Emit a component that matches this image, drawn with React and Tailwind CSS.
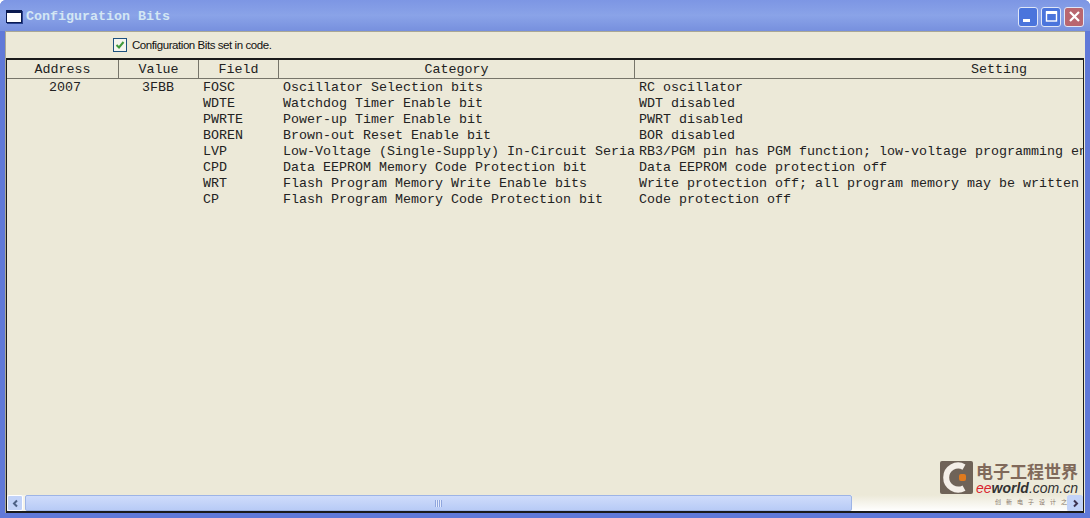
import React from "react";

const rows = [
  ["2007", "3FBB", "FOSC", "Oscillator Selection bits", "RC oscillator"],
  ["", "", "WDTE", "Watchdog Timer Enable bit", "WDT disabled"],
  ["", "", "PWRTE", "Power-up Timer Enable bit", "PWRT disabled"],
  ["", "", "BOREN", "Brown-out Reset Enable bit", "BOR disabled"],
  ["", "", "LVP", "Low-Voltage (Single-Supply) In-Circuit Seria", "RB3/PGM pin has PGM function; low-voltage programming en"],
  ["", "", "CPD", "Data EEPROM Memory Code Protection bit", "Data EEPROM code protection off"],
  ["", "", "WRT", "Flash Program Memory Write Enable bits", "Write protection off; all program memory may be written"],
  ["", "", "CP", "Flash Program Memory Code Protection bit", "Code protection off"],
];

const mono = "font-['Liberation_Mono','Courier_New',monospace]";

const HeaderCell = ({ className, children }) => (
  <div className={`h-[18px] shrink-0 flex items-center justify-center border-r border-[#77756a] overflow-hidden pt-[2px] ${className}`}>
    {children}
  </div>
);

const WinButton = ({ className, children }) => (
  <div className={`w-[20px] h-[20px] rounded-[3px] border border-[#dfe6f8] flex items-center justify-center ${className}`}>
    <svg width="15" height="15" viewBox="0 0 15 15">{children}</svg>
  </div>
);

const Logo = () => (
  <div className="absolute right-[5px] bottom-[5px] w-[138px] h-[45px] flex items-start gap-[3px]">
    <svg width="33" height="33" viewBox="0 0 33 33" className="shrink-0">
      <rect width="33" height="33" rx="2" fill="#6f6358" />
      <path d="M24 6 A12 12 0 1 0 24 27" fill="none" stroke="#f4efe8" strokeWidth="6" />
      <rect x="19" y="13" width="7" height="7" rx="2" fill="#e07a1e" />
    </svg>
    <div className="flex flex-col items-start">
      <span className="text-[17px] leading-[20px] font-bold text-[#80695a] whitespace-nowrap font-['Noto_Sans_CJK_SC',sans-serif]">电子工程世界</span>
      <span className="text-[14px] leading-[14px] italic whitespace-nowrap font-['Liberation_Sans',sans-serif] text-[#333]">
        <span className="text-[#d9232e]">ee</span>
        <span className="font-bold">world</span>
        <span>.com.cn</span>
      </span>
      <span className="text-[6px] leading-[8px] tracking-[5px] mt-[3px] ml-[19px] whitespace-nowrap text-[#8a7a6c] font-['Noto_Sans_CJK_SC',sans-serif]">创新电子设计之</span>
    </div>
  </div>
);

export default function App() {
  return (
    <div className="w-[1090px] h-[518px] overflow-hidden flex flex-col bg-[#6079d8] rounded-t-[6px]">
      {/* title bar */}
      <div className="h-[31px] shrink-0 flex items-center pt-[2px] pl-[6px] pr-[6px] bg-gradient-to-b from-[#7d96e4] via-[#8aa3e8] to-[#7790de]">
        <div className="w-[16px] h-[13px] bg-white border border-[#0a1a50] border-t-[3px] shadow-[1px_1px_0_#27408f]" />
        <span className={`ml-[4px] text-[13.33px] font-bold text-[#d3e6f4] ${mono}`}>Configuration Bits</span>
        <div className="ml-auto flex gap-[3px]">
          <WinButton className="bg-[#4a74dc]">
            <rect x="2" y="10" width="7" height="3" fill="#fff" />
          </WinButton>
          <WinButton className="bg-[#4a74dc]">
            <rect x="2.5" y="3" width="10" height="9" fill="none" stroke="#fff" strokeWidth="1.4" />
            <rect x="2" y="2" width="11" height="3" fill="#fff" />
          </WinButton>
          <WinButton className="bg-[#b9666f]">
            <path d="M3 3 L12 12 M12 3 L3 12" stroke="#fff" strokeWidth="2.2" />
          </WinButton>
        </div>
      </div>

      {/* client area */}
      <div className="flex-1 min-h-0 mx-[5px] mb-[5px] flex flex-col bg-[#ece9d8] border-t border-l border-[#a9a795]">
        <div className="h-[26px] shrink-0 flex items-center pl-[107px]">
          <div className="w-[14px] h-[14px] border border-[#1c5180] bg-[#f4f4ee] flex items-center justify-center">
            <svg width="10" height="10" viewBox="0 0 10 10">
              <path d="M1.5 5 L4 7.5 L8.5 2" fill="none" stroke="#3f9a3a" strokeWidth="2" />
            </svg>
          </div>
          <span className="ml-[5px] pt-[1px] text-[11.5px] tracking-[-0.43px] text-[#111] font-['Liberation_Sans',Arial,sans-serif]">Configuration Bits set in code.</span>
        </div>

        {/* list */}
        <div className={`relative flex-1 min-h-0 flex flex-col overflow-hidden mr-[1px] border-t-2 border-l border-r border-b-2 border-[#1a1a1a] text-[13.33px] text-[#222] ${mono}`}>
          <div className="flex shrink-0 border-b border-[#77756a]">
            <HeaderCell className="w-[112px]">Address</HeaderCell>
            <HeaderCell className="w-[80px]">Value</HeaderCell>
            <HeaderCell className="w-[80px]">Field</HeaderCell>
            <HeaderCell className="w-[356px]">Category</HeaderCell>
            <HeaderCell className="w-[728px] border-r-0">Setting</HeaderCell>
          </div>

          <div className="flex-1 min-h-0 pt-[1px]">
            {rows.map((r) => (
              <div key={r[2]} className="flex h-[16px] leading-[16px] whitespace-nowrap">
                <div className="w-[112px] shrink-0 pl-[4px] text-center">{r[0]}</div>
                <div className="w-[80px] shrink-0 pr-[2px] text-center">{r[1]}</div>
                <div className="w-[80px] shrink-0 pl-[4px]">{r[2]}</div>
                <div className="w-[356px] shrink-0 pl-[4px] overflow-hidden">{r[3]}</div>
                <div className="shrink-0 pl-[4px]">{r[4]}</div>
              </div>
            ))}
          </div>

          {/* scroll bar */}
          <div className="h-[16px] shrink-0 flex bg-[#f4f3ea]">
            <div className="w-[16px] shrink-0 flex items-center justify-center rounded-[2px] border border-white bg-[#c2d3f8]">
              <svg width="9" height="9" viewBox="0 0 9 9">
                <path d="M6 1.5 L3 4.5 L6 7.5" fill="none" stroke="#4d6185" strokeWidth="2" />
              </svg>
            </div>
            <div className="w-[2px] shrink-0" />
            <div className="w-[827px] shrink-0 flex items-center justify-center rounded-[2px] border border-[#9db4e6] bg-gradient-to-b from-[#cfdcfb] to-[#b8cbf6]">
              <div className="w-[7px] h-[7px] bg-[repeating-linear-gradient(90deg,#8fa6de_0_1px,#e3eafc_1px_2px)]" />
            </div>
            <div className="flex-1 bg-gradient-to-b from-[#ece9d8] to-white" />
            <div className="w-[16px] shrink-0 flex items-center justify-center rounded-[2px] bg-[#c2d3f8]">
              <svg width="9" height="9" viewBox="0 0 9 9">
                <path d="M3 1.5 L6 4.5 L3 7.5" fill="none" stroke="#3d3350" strokeWidth="2" />
              </svg>
            </div>
          </div>

          <Logo />
        </div>
      </div>
    </div>
  );
}
